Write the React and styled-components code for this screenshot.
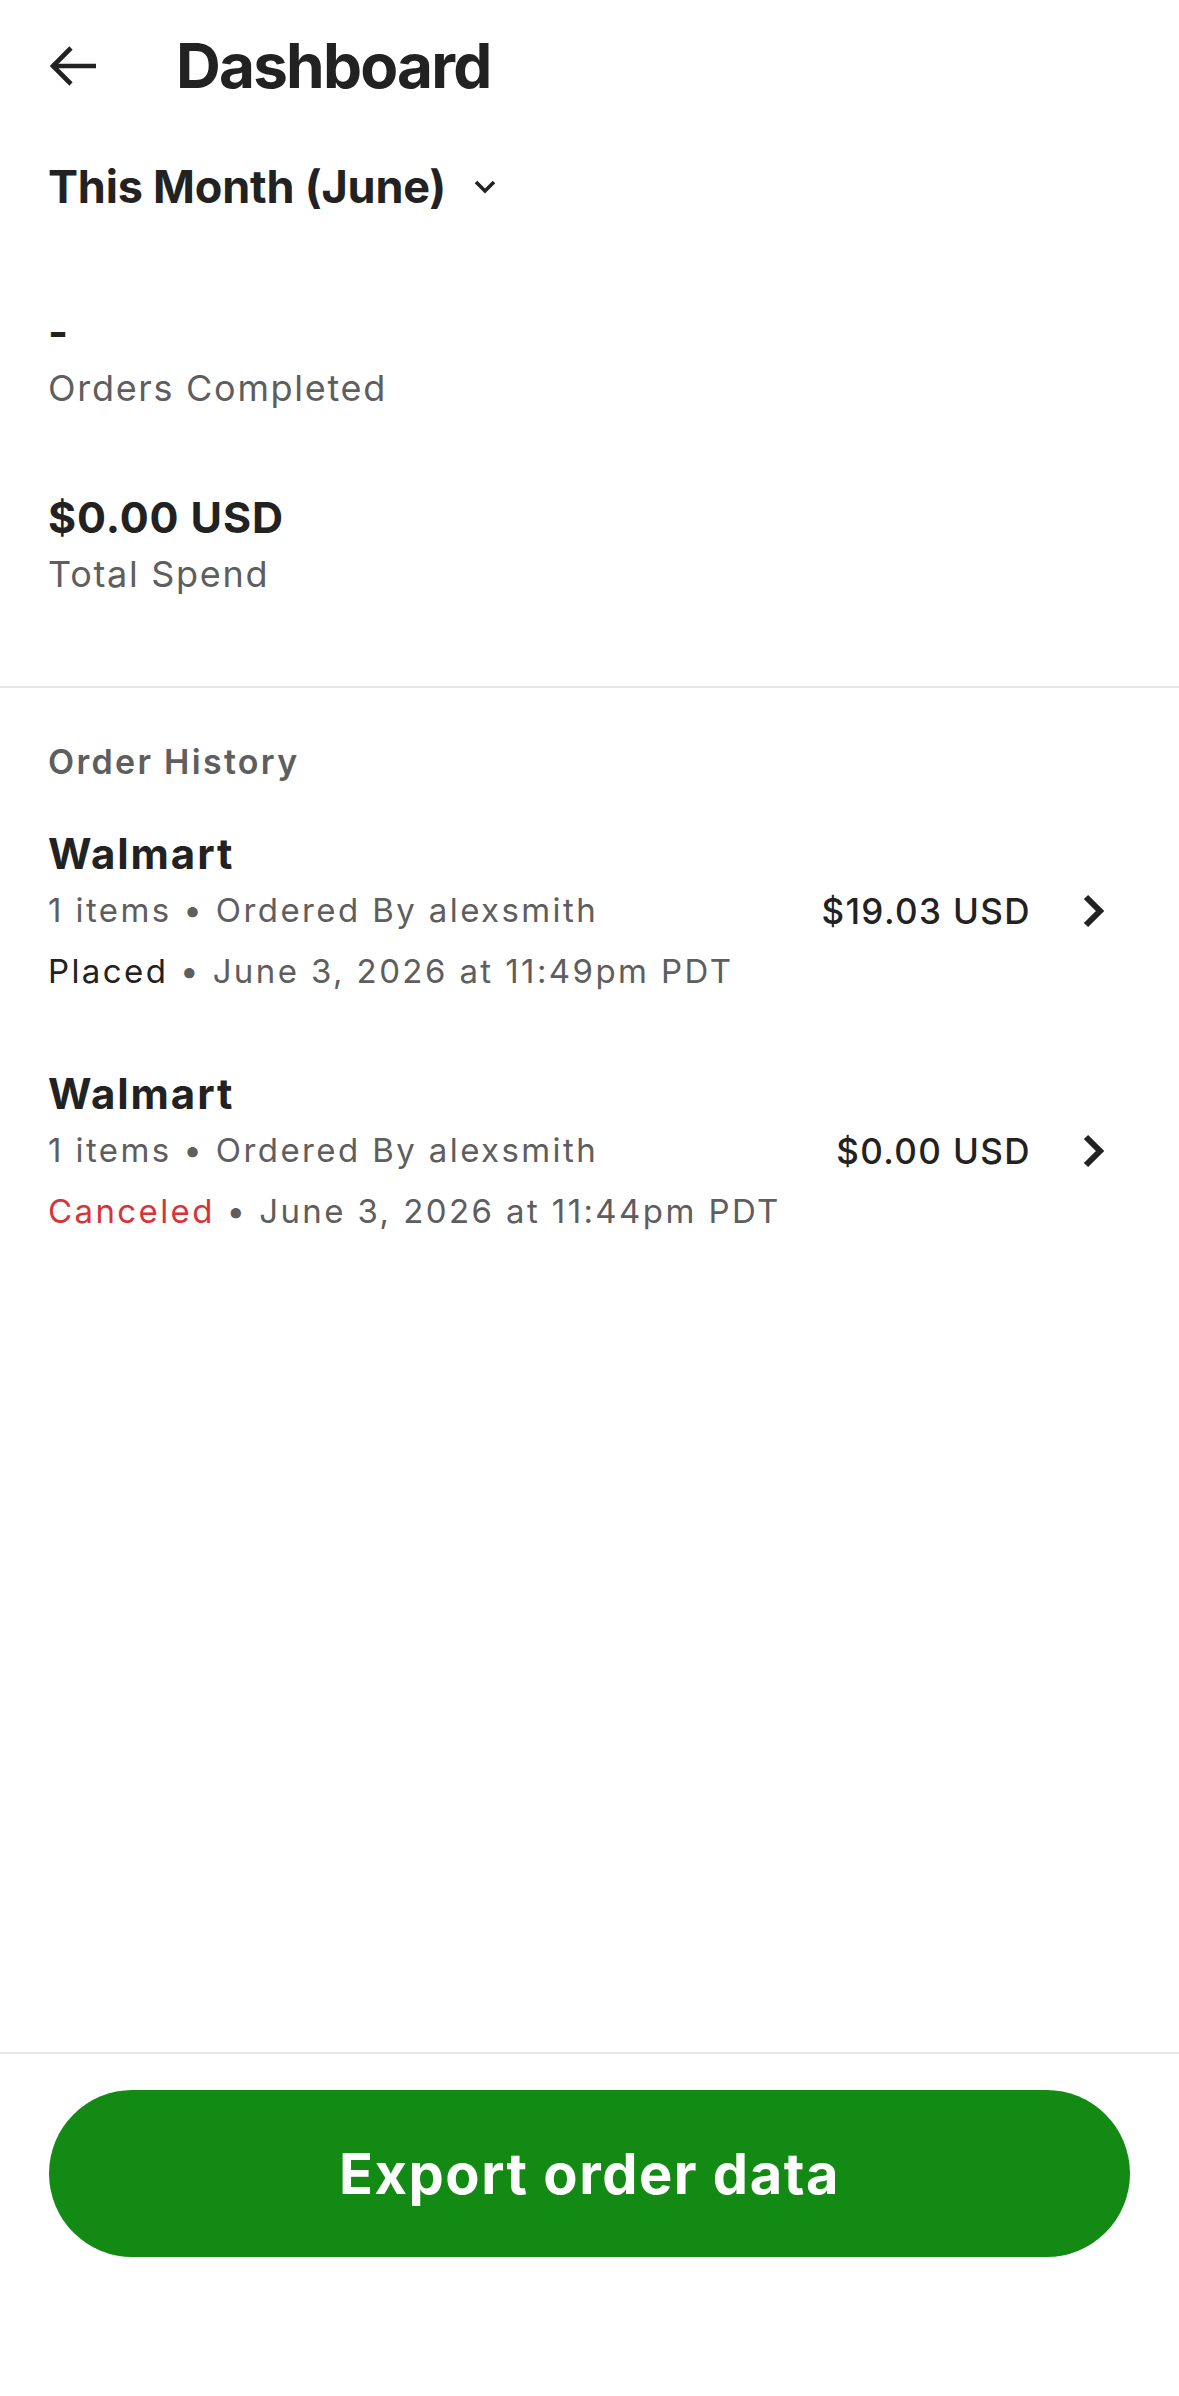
import React from 'react';
import styled, { createGlobalStyle } from 'styled-components';

const GlobalStyle = createGlobalStyle`
  html, body {
    margin: 0;
    padding: 0;
    background: #ffffff;
  }
  body {
    font-family: Inter, "Noto Sans", "Liberation Sans", sans-serif;
    color: #222222;
  }
`;

const Page = styled.div`
  display: flex;
  flex-direction: column;
  min-height: 2396px;
  width: 1179px;
  box-sizing: border-box;
`;

const Header = styled.header`
  display: flex;
  align-items: center;
  height: 132px;
  padding: 0 48px;
`;

const BackButton = styled.button`
  display: flex;
  align-items: center;
  width: 128px;
  height: 132px;
  padding: 0;
  border: 0;
  background: none;
  cursor: pointer;
`;

const Title = styled.h1`
  margin: 0;
  font-size: 62px;
  line-height: 132px;
  font-weight: 700;
  letter-spacing: -1.8px;
  color: #222222;
`;

const MonthPicker = styled.button`
  display: flex;
  align-items: center;
  gap: 28px;
  margin: 28px 0 0 48px;
  padding: 0;
  border: 0;
  background: none;
  font-family: inherit;
  font-size: 45px;
  line-height: 54px;
  font-weight: 700;
  letter-spacing: -0.2px;
  color: #222222;
  align-self: flex-start;
`;

const Stats = styled.section`
  display: flex;
  flex-direction: column;
  gap: 81px;
  padding: 91px 48px 90px;
  border-bottom: 2px solid #e8e8e8;
`;

const Stat = styled.div`
  display: flex;
  flex-direction: column;
  gap: 9px;
`;

const StatValue = styled.div`
  font-size: 43px;
  line-height: 52px;
  font-weight: 700;
  letter-spacing: 0.9px;
  color: #222222;
`;

const StatLabel = styled.div`
  font-size: 36px;
  line-height: 44px;
  font-weight: 400;
  letter-spacing: 1.7px;
  color: #5e5e5e;
`;

const History = styled.section`
  display: flex;
  flex-direction: column;
  padding: 52px 74px 0 48px;
`;

const SectionTitle = styled.h2`
  margin: 0 0 44px;
  font-size: 34px;
  line-height: 44px;
  font-weight: 600;
  letter-spacing: 2.3px;
  color: #5e5e5e;
`;

const OrderList = styled.div`
  display: flex;
  flex-direction: column;
  gap: 66px;
`;

const OrderRow = styled.div`
  display: flex;
  align-items: center;
  justify-content: space-between;
  cursor: pointer;
`;

const OrderInfo = styled.div`
  display: flex;
  flex-direction: column;
`;

const Store = styled.div`
  font-size: 42px;
  line-height: 52px;
  font-weight: 700;
  letter-spacing: 1.9px;
  color: #222222;
`;

const Meta = styled.div`
  font-size: 33px;
  line-height: 61px;
  font-weight: 400;
  letter-spacing: 2.4px;
  color: #5e5e5e;
`;

const Status = styled.span`
  color: ${(p) => (p.$canceled ? '#d6343a' : '#222222')};
`;

const OrderSide = styled.div`
  display: flex;
  align-items: center;
  gap: 52px;
  padding-bottom: 8px;
`;

const Price = styled.div`
  font-size: 35px;
  line-height: 44px;
  font-weight: 500;
  letter-spacing: 1.4px;
  color: #222222;
`;

const Footer = styled.footer`
  margin-top: auto;
  border-top: 2px solid #e8e8e8;
  padding: 36px 49px 139px;
`;

const ExportButton = styled.button`
  display: flex;
  align-items: center;
  justify-content: center;
  width: 100%;
  height: 167px;
  border: 0;
  border-radius: 84px;
  background: #138a13;
  color: #ffffff;
  font-family: inherit;
  font-size: 56px;
  font-weight: 700;
  letter-spacing: 1.5px;
  cursor: pointer;
`;

const BackArrow = () => (
  <svg width="48" height="40" viewBox="0 0 48 40" fill="none">
    <path d="M4 20 H48" stroke="#222222" strokeWidth="4.6" />
    <path d="M23 2 L5 20 L23 38" stroke="#222222" strokeWidth="4.6" />
  </svg>
);

const ChevronDown = () => (
  <svg width="22" height="14" viewBox="0 0 22 14" fill="none">
    <path d="M2 2 L11 11 L20 2" stroke="#222222" strokeWidth="3.6" />
  </svg>
);

const ChevronRight = () => (
  <svg width="22" height="34" viewBox="0 0 22 34" fill="none">
    <path d="M3 3 L17 17 L3 31" stroke="#222222" strokeWidth="6" />
  </svg>
);

const orders = [
  { store: 'Walmart', items: 1, by: 'alexsmith', price: '$19.03 USD', status: 'Placed', date: 'June 3, 2026 at 11:49pm PDT' },
  { store: 'Walmart', items: 1, by: 'alexsmith', price: '$0.00 USD', status: 'Canceled', date: 'June 3, 2026 at 11:44pm PDT' },
];

function App() {
  return (
    <>
      <GlobalStyle />
      <Page>
        <Header>
          <BackButton aria-label="Back">
            <BackArrow />
          </BackButton>
          <Title>Dashboard</Title>
        </Header>

        <MonthPicker>
          This Month (June)
          <ChevronDown />
        </MonthPicker>

        <Stats>
          <Stat>
            <StatValue>-</StatValue>
            <StatLabel>Orders Completed</StatLabel>
          </Stat>
          <Stat>
            <StatValue>$0.00 USD</StatValue>
            <StatLabel>Total Spend</StatLabel>
          </Stat>
        </Stats>

        <History>
          <SectionTitle>Order History</SectionTitle>
          <OrderList>
            {orders.map((o, i) => (
              <OrderRow key={i}>
                <OrderInfo>
                  <Store>{o.store}</Store>
                  <Meta>{o.items} items • Ordered By {o.by}</Meta>
                  <Meta>
                    <Status $canceled={o.status === 'Canceled'}>{o.status}</Status> • {o.date}
                  </Meta>
                </OrderInfo>
                <OrderSide>
                  <Price>{o.price}</Price>
                  <ChevronRight />
                </OrderSide>
              </OrderRow>
            ))}
          </OrderList>
        </History>

        <Footer>
          <ExportButton>Export order data</ExportButton>
        </Footer>
      </Page>
    </>
  );
}

export default App;
